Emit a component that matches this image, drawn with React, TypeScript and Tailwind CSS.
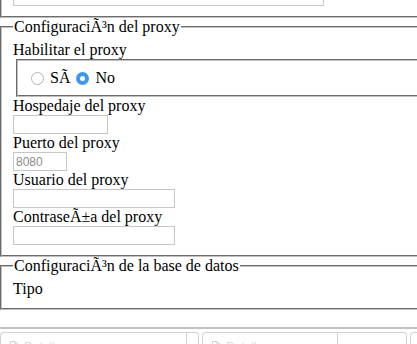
import React from 'react';

// Groove borders like the browser's default fieldset
const groove = 'border-[#c0c0c0] [border-style:groove]';

const Radio: React.FC<{ checked?: boolean }> = ({ checked }) =>
  checked ? (
    <span className="flex h-[13px] w-[13px] items-center justify-center rounded-full bg-[#3d97f5]">
      <span className="h-[5px] w-[5px] rounded-full bg-white" />
    </span>
  ) : (
    <span className="h-[13px] w-[13px] rounded-full border border-[#b3b3b3] bg-white" />
  );

const Field: React.FC<{ label: string; width: string; placeholder?: string }> = ({ label, width, placeholder }) => (
  <>
    <div className="h-[18px]">{label}</div>
    <input
      className={`block h-[19px] ${width} border border-[#c6c6c6] bg-white px-[2px] font-['Liberation_Sans',sans-serif] text-[12px] leading-[17px] outline-none placeholder:text-[#8c8c8c]`}
      placeholder={placeholder}
    />
  </>
);

const BottomTab: React.FC<{ width: string; split: string; label?: boolean }> = ({ width, split, label = true }) => (
  <div className={`flex h-[20px] shrink-0 ${width} rounded-t-[4px] border border-b-0 border-[#d2d2d2]`}>
    <div className={`flex ${split} items-start gap-[6px] pl-[9px] pt-[7px] font-['Liberation_Sans',sans-serif] text-[12px] leading-[14px] text-[#dcdcdc]`}>
      {label && (
        <>
          <svg width="8" height="10" viewBox="0 0 8 10" className="mt-[1px]">
            <path d="M0.5 0.5h4.5l2.5 2.5v6.5h-7z M5 0.5v2.5h2.5" fill="none" stroke="#d2d2d2" />
          </svg>
          <span>Detalles</span>
        </>
      )}
    </div>
    <div className="flex-1 border-l border-[#d2d2d2]" />
  </div>
);

export default function App() {
  return (
    <div className="h-[344px] w-[417px] overflow-hidden bg-white font-['Liberation_Serif',serif] text-[16px] leading-[18px] text-black">
      <div className="w-[640px]">
        {/* tail of the previous fieldset */}
        <div className={`h-[18px] border-b-2 border-l-2 pl-[11px] ${groove}`}>
          <div className="h-[6px] w-[311px] border-x border-b border-[#c8c8c8]" />
        </div>

        <fieldset className={`border-2 px-[11px] pb-[10px] pt-[5px] ${groove}`}>
          <legend className="px-[1px] leading-[18px]">ConfiguraciÃ³n del proxy</legend>
          <div className="h-[18px]">Habilitar el proxy</div>
          <div className={`ml-[3px] flex h-[38px] items-center border-2 pl-[13px] ${groove}`}>
            <Radio />
            <span className="ml-[6px]">SÃ</span>
            <span className="ml-[6px]">
              <Radio checked />
            </span>
            <span className="ml-[6px]">No</span>
          </div>
          <Field label="Hospedaje del proxy" width="w-[95px]" />
          <Field label="Puerto del proxy" width="w-[54px]" placeholder="8080" />
          <Field label="Usuario del proxy" width="w-[162px]" />
          <Field label="ContraseÃ±a del proxy" width="w-[162px]" />
        </fieldset>

        <fieldset className={`border-2 px-[11px] pb-[10px] pt-[5px] ${groove}`}>
          <legend className="px-[1px] leading-[18px]">ConfiguraciÃ³n de la base de datos</legend>
          <div className="h-[18px]">Tipo</div>
        </fieldset>
      </div>

      <div className="mt-[17px] h-[2px] w-full bg-[#c2c2c2]" />
      <div className="mt-[3px] flex gap-[3px]">
        <BottomTab width="w-[199px]" split="w-[185px]" />
        <BottomTab width="w-[205px]" split="w-[134px]" />
        <BottomTab width="w-[60px]" split="w-[20px]" label={false} />
      </div>
    </div>
  );
}
